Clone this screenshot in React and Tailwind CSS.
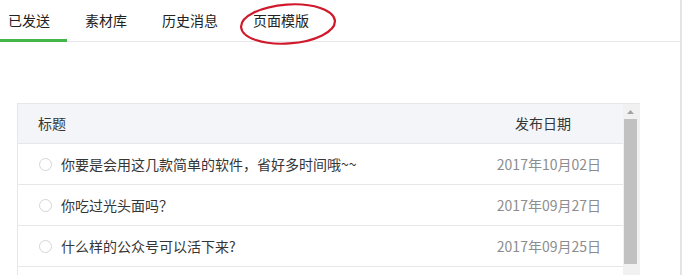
import React from 'react';

const tabs = ['已发送', '素材库', '历史消息', '页面模版'];

const rows = [
  { title: '你要是会用这几款简单的软件，省好多时间哦~~', date: '2017年10月02日' },
  { title: '你吃过光头面吗？', date: '2017年09月27日' },
  { title: '什么样的公众号可以活下来?', date: '2017年09月25日' },
  { title: '', date: '' },
];

const App = () => {
  return (
    <div
      className="relative w-[682px] h-[275px] overflow-hidden bg-white"
      style={{ fontFamily: '"Noto Sans CJK SC", "Microsoft YaHei", sans-serif' }}
    >
      <div className="w-[682px] h-[275px] border-r-2 border-[#e4e4e7]">
        {/* tabs */}
        <div className="flex h-[42px] border-b border-[#e7e7eb]">
          {tabs.map((t, i) => (
            <div
              key={t}
              className={
                'flex h-[42px] items-center pl-2 pr-[17px] mr-[10px] text-[14px] text-[#222] ' +
                (i === 0 ? 'border-b-[3px] border-[#44b549] pt-[1px]' : 'pb-[2px]')
              }
            >
              {t}
            </div>
          ))}
        </div>

        {/* table */}
        <div className="pt-[61px] pl-[17px] w-[640px]">
          <div className="flex border-l border-t border-[#e7e7eb]">
            <div className="flex-1">
              <div className="flex h-[40px] items-center bg-[#f4f5f9] border-b border-[#e7e7eb] text-[14px] text-[#353535]">
                <span className="pl-5 flex-1">标题</span>
                <span className="pr-[52px]">发布日期</span>
              </div>
              {rows.map((r, i) => (
                <div
                  key={i}
                  className="flex h-[41px] items-center border-b border-[#e7e7eb] text-[14px]"
                >
                  <span className="ml-[21px] w-[13px] h-[13px] rounded-full border border-[#d6d6d6]" />
                  <span className="ml-[9px] flex-1 text-[#353535]">{r.title}</span>
                  <span className="pr-[22px] text-[#8d8d8d]">{r.date}</span>
                </div>
              ))}
            </div>
            {/* scrollbar */}
            <div className="flex flex-col w-[17px] bg-[#f1f1f1] pl-[1px] pr-[3px]">
              <div className="flex h-[15px] items-center justify-center">
                <svg width="7" height="4" viewBox="0 0 7 4">
                  <path d="M3.5 0 L7 4 L0 4 Z" fill="#a3a3a3" />
                </svg>
              </div>
              <div className="h-[145px] bg-[#c1c1c1]" />
            </div>
          </div>
        </div>
      </div>

      {/* red annotation */}
      <svg
        className="absolute left-[238px] top-0 pointer-events-none"
        width="100"
        height="48"
        viewBox="0 0 100 48"
      >
        <ellipse
          cx="50"
          cy="24"
          rx="47"
          ry="19.5"
          transform="rotate(-4 50 24)"
          fill="none"
          stroke="#d0192b"
          strokeWidth="2.2"
        />
      </svg>
    </div>
  );
};

export default App;
